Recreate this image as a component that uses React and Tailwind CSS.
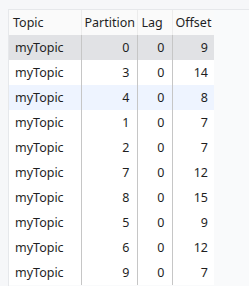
const rows = [
  { topic: "myTopic", partition: 0, lag: 0, offset: 9 },
  { topic: "myTopic", partition: 3, lag: 0, offset: 14 },
  { topic: "myTopic", partition: 4, lag: 0, offset: 8 },
  { topic: "myTopic", partition: 1, lag: 0, offset: 7 },
  { topic: "myTopic", partition: 2, lag: 0, offset: 7 },
  { topic: "myTopic", partition: 7, lag: 0, offset: 12 },
  { topic: "myTopic", partition: 8, lag: 0, offset: 15 },
  { topic: "myTopic", partition: 5, lag: 0, offset: 9 },
  { topic: "myTopic", partition: 6, lag: 0, offset: 12 },
  { topic: "myTopic", partition: 9, lag: 0, offset: 7 },
];

export default function App() {
  return (
    <div
      className="h-[286px] w-[249px] overflow-hidden bg-[#f6f7f9] pl-2 pt-[9px] text-[12.5px] text-[#1f1f1f]"
      style={{ fontFamily: '"Noto Sans", "Open Sans", sans-serif' }}
    >
      <div className="h-full border-l border-t border-[#e6e8eb] bg-[#f9fafb]">
        <table className="table-fixed border-collapse bg-white leading-[25px]">
          <colgroup>
            <col className="w-[72px]" />
            <col className="w-[56px]" />
            <col className="w-[35px]" />
            <col className="w-[42px]" />
          </colgroup>
          <thead>
            <tr className="h-[25px] bg-[#fafafa]">
              <th className="border-r border-[#ececec] pl-1 text-left font-normal">Topic</th>
              <th className="border-r border-[#ececec] pl-[3px] text-left font-normal">Partition</th>
              <th className="border-r border-[#ececec] pl-1 text-left font-normal">Lag</th>
              <th className="pl-[3px] text-left font-normal">Offset</th>
            </tr>
          </thead>
          <tbody>
            {rows.map((r, i) => (
              <tr
                key={i}
                className={
                  "h-[25px] " +
                  (i === 0 ? "bg-[#e1e2e5]" : i === 2 ? "bg-[#eef4ff]" : "")
                }
              >
                <td className="border-r border-[#c6c6c6] pl-1.5">{r.topic}</td>
                <td className="border-r border-[#c6c6c6] pr-[7px] text-right">{r.partition}</td>
                <td className="border-r border-[#c6c6c6] pr-[7px] text-right">{r.lag}</td>
                <td className="pr-1.5 text-right">{r.offset}</td>
              </tr>
            ))}
          </tbody>
        </table>
      </div>
    </div>
  );
}
